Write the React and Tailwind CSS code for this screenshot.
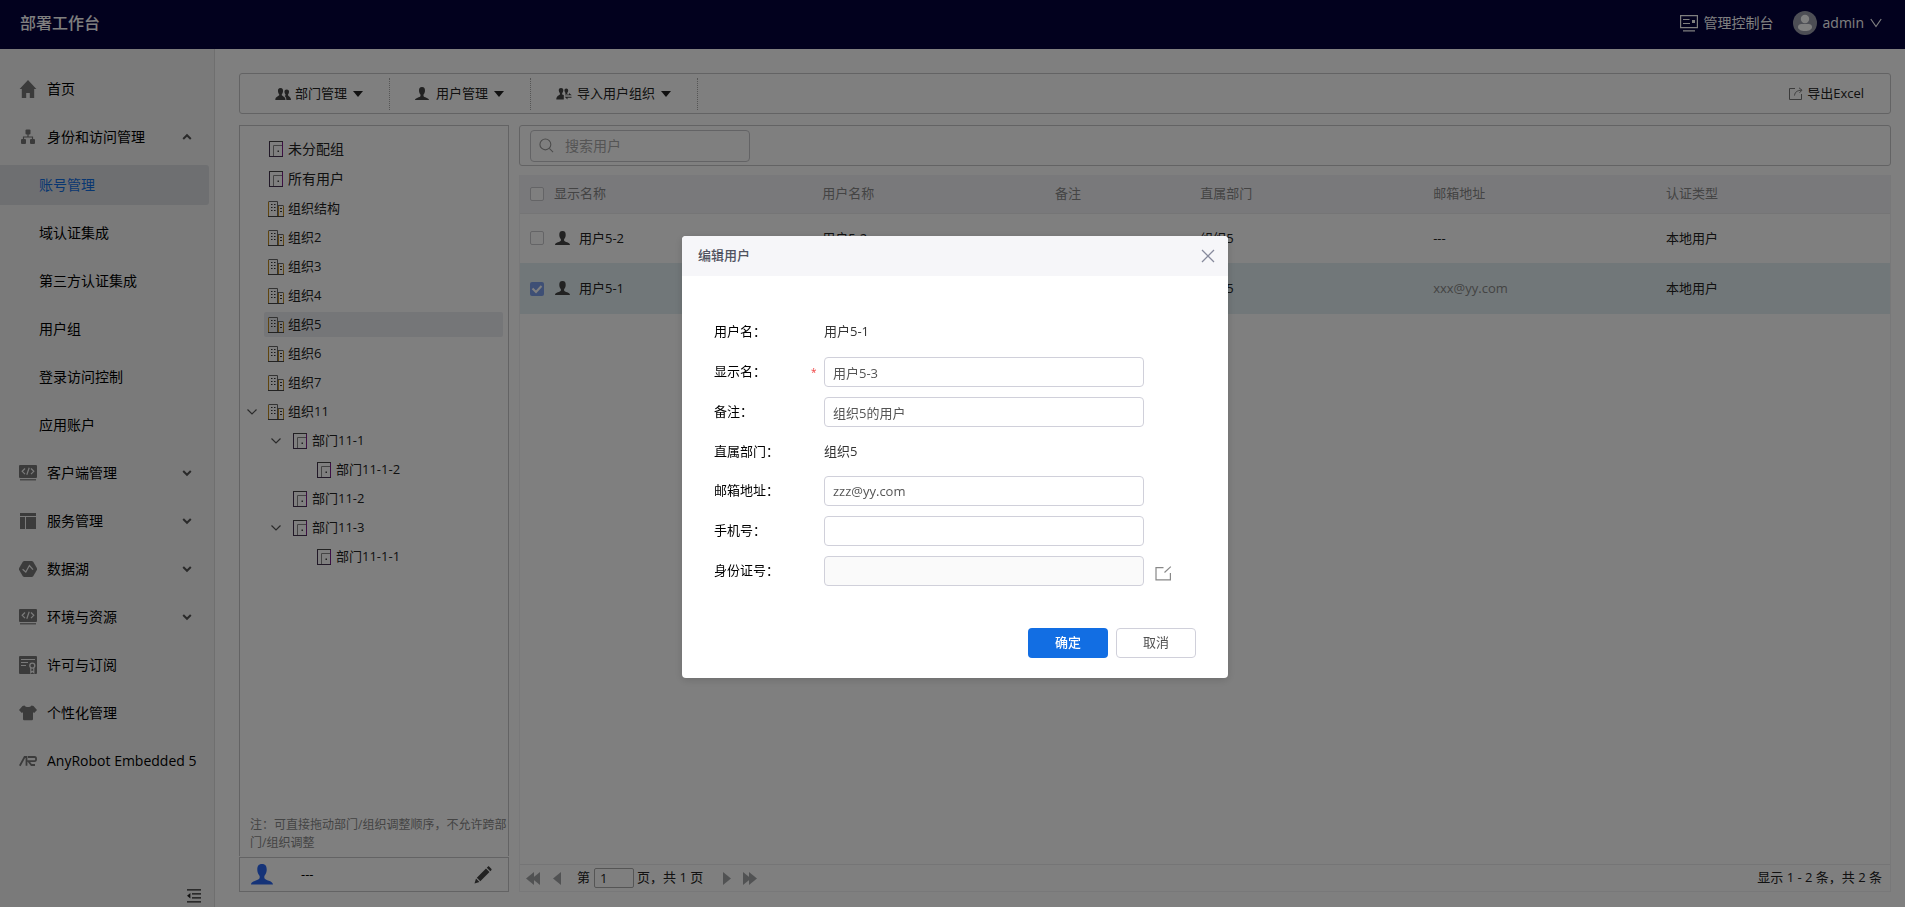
import { useState } from "react";

// ---------------------------
// ICONS
// ---------------------------
const HomeIcon = () => (
  <svg width="18" height="18" viewBox="0 0 18 18" fill="currentColor">
    <path d="M9 0 0.6 9h2.2v9h4.4v-5h3.6v5h4.4V9h2.2z" />
  </svg>
);

const OrgIcon = () => (
  <svg width="18" height="18" viewBox="0 0 18 18" fill="currentColor">
    <rect x="6.5" y="1.5" width="5" height="5" rx="1" />
    <rect x="2" y="11" width="5" height="5" rx="1" />
    <rect x="11" y="11" width="5" height="5" rx="1" />
    <path d="M8.4 6v2.4H3.9V12h1.2V9.6h7.8V12h1.2V8.4H9.6V6z" />
  </svg>
);

const CodeIcon = () => (
  <svg width="18" height="18" viewBox="0 0 18 18">
    <rect x="0" y="1" width="18" height="13" rx="1" fill="currentColor" />
    <rect x="1" y="15.2" width="16" height="1.2" fill="currentColor" />
    <path d="M6 4.5 3.2 7.3 6 10.1M12 4.5l2.8 2.8L12 10.1M10.2 3.8 7.8 10.8" fill="none" stroke="#f5f5f5" strokeWidth="1.2" />
  </svg>
);

const LayoutIcon = () => (
  <svg width="18" height="18" viewBox="0 0 18 18" fill="currentColor">
    <rect x="1" y="1" width="16" height="3" />
    <rect x="1" y="5" width="5" height="12" />
    <rect x="7" y="5" width="10" height="12" />
  </svg>
);

const LakeIcon = () => (
  <svg width="18" height="18" viewBox="0 0 18 18">
    <path d="M5 1h8l1.2.7L18 8.3v1.4l-3.8 6.6-1.2.7H5l-1.2-.7L0 9.7V8.3l3.8-6.6z" fill="currentColor" />
    <path d="M3.6 9.3 6.8 12 10.4 5.5 14 9.6" fill="none" stroke="#f5f5f5" strokeWidth="1.2" />
  </svg>
);

const LicenseIcon = () => (
  <svg width="18" height="18" viewBox="0 0 18 18">
    <rect width="18" height="18" rx="1" fill="currentColor" />
    <path d="M2 3.5h14M2 6.5h7M2 9.5h5" stroke="#f5f5f5" strokeWidth="1.1" />
    <circle cx="13.3" cy="9.6" r="2.5" fill="none" stroke="#f5f5f5" strokeWidth="1.3" />
    <path d="M11.8 12v4.6l1.5-1.3 1.5 1.3V12" fill="none" stroke="#f5f5f5" strokeWidth="1.2" />
  </svg>
);

const ShirtIcon = () => (
  <svg width="18" height="18" viewBox="0 0 18 18" fill="currentColor">
    <path d="M5.5 1.5C7 3.6 11 3.6 12.5 1.5L14.500 2 18 6l-2.800 3-1.200-.8V15.500l-.8.8H4.800l-.8-.8V8.200L2.800 9 0 6l3.500-4z" />
  </svg>
);

const RobotIcon = () => (
  <svg width="18" height="18" viewBox="0 0 18 18" fill="none" stroke="currentColor" strokeWidth="1.8">
    <path d="M0.8 13.800 5.600 5h1.900v8.800M9 5h6.600c2 0 2 4.200 0 4.200H9.400l3 3.800H16" />
  </svg>
);

const Arrow = ({ up }) => (
  <svg width="10" height="8" viewBox="0 0 10 8" fill="none" stroke="#555" strokeWidth="2">
    <path d={up ? "M1.200 6 5 2.200 8.800 6" : "M1.200 2 5 5.800 8.800 2"} />
  </svg>
);

const ThinArrow = ({ className }) => (
  <svg className={className} width="12" height="10" viewBox="0 0 12 10" fill="none" stroke="currentColor" strokeWidth="1.200">
    <path d="M1.500 2.500 6 7 10.500 2.500" />
  </svg>
);

const Caret = () => (
  <svg width="10" height="6" viewBox="0 0 10 6" fill="#222">
    <path d="M0 0h10L5 6z" />
  </svg>
);

const UserIcon = ({ size = 15, className = "text-[#444]" }) => (
  <svg className={className} width={size} height={size} viewBox="0 0 15 15" fill="currentColor">
    <path d="M7.500 0C5 0 4.200 1.600 4.300 4.200c.1 1.700.8 3 1.600 3.900v1.500C5.600 11.400 0 11.300 0 14h15c0-2.700-5.600-2.600-5.900-4.400V8.100c.8-.9 1.500-2.200 1.600-3.900C10.800 1.600 10 0 7.500 0z" />
  </svg>
);

const UsersIcon = () => (
  <svg width="16" height="14" viewBox="0 0 16 14" fill="#444">
    <path d="M5.500 1C3.400 1 2.800 2.500 3 4.400c.1 1.200.6 2.200 1.200 2.900v1C3.800 9.200.3 9.500.3 13h10.200c0-3.500-3.300-3.800-3.700-4.700v-1c.6-.7 1.100-1.700 1.200-2.900C8.200 2.500 7.600 1 5.500 1z" />
    <path d="M11.700 2.500c-1.800 0-2.400 1.200-2.200 2.700.1 1 .5 1.800 1 2.300v.8l-.8.6c1 .8 1.600 2 1.700 4.100H16c0-3-2.700-3.700-3-4.700v-.8c.5-.5.9-1.300 1-2.300.2-1.500-.5-2.700-2.300-2.700z" />
  </svg>
);

const ImportIcon = () => (
  <svg width="16" height="14" viewBox="0 0 16 14" fill="#444">
    <path d="M5 1C3.200 1 2.600 2.200 2.800 3.800c.1 1 .5 1.800 1.100 2.400v1.200C3.500 8.200.3 8.500.3 12.500h7.500V7.900L6.200 7.400V6.200c.5-.6 1-1.400 1.100-2.400C7.500 2.200 6.800 1 5 1z" />
    <path d="M10.300 1.500c-1.500 0-2 1-1.800 2.300.1.900.4 1.500.9 2v1.300h1.900V5.800c.4-.5.800-1.100.9-2 .1-1.300-.4-2.300-1.900-2.300z" />
    <path d="M9 7.500h4V6l2.800 2.200H9zM15.500 10.800h-4V12.500L8.700 9.800h6.800z" />
  </svg>
);

const DoorIcon = () => (
  <svg width="16" height="16" viewBox="0 0 16 16" fill="none">
    <path d="M1.500.5v15M1 15.500h14" stroke="#43304f" />
    <path d="M1 .5h14" stroke="#444" />
    <path d="M14.500 1v14" stroke="#7d1f8a" />
    <path d="M5.500 15V4.500H14" stroke="#888" />
    <rect x="9.500" y="9.500" width="1.500" height="1.500" fill="#444" />
  </svg>
);

const BuildingIcon = () => (
  <svg width="16" height="16" viewBox="0 0 16 16" fill="none">
    <path d="M0 15.500h16" stroke="#444" />
    <path d="M.500.500h9V15M10 4.500h5.500" stroke="#666" />
    <path d="M.500 15V1M15.500 15V5M10.500 5v10" stroke="#c08a1c" />
    <path d="M3 3.500h1.500M6 3.500h1.500M3 6.500h1.500M6 6.500h1.500M3 9.500h1.500M6 9.500h1.500M12 7.500h2M12 10.500h2" stroke="#333" />
  </svg>
);

const SearchIcon = () => (
  <svg width="15" height="15" viewBox="0 0 16 16" fill="none" stroke="#999" strokeWidth="1.200">
    <circle cx="6.800" cy="6.800" r="5.800" />
    <path d="m11 11 4 4" />
  </svg>
);

const ExportIcon = () => (
  <svg width="14" height="14" viewBox="0 0 14 14" fill="none" stroke="#777">
    <path d="M6 1.500H.5v11h12V7" />
    <path d="M5.500 8.500C6 5 8 3.500 12.500 3.200M10 .8l3 2.400-2.500 2.600" />
  </svg>
);

const EditIcon = () => (
  <svg width="17" height="15" viewBox="0 0 17 15" fill="none" stroke="#888" strokeWidth="1.200">
    <path d="M8.500 1.600H1v12.200h14.400V7M9.500 6.500 15.800.6" />
  </svg>
);

const PencilIcon = () => (
  <svg width="18" height="18" viewBox="0 0 18 18" fill="#444">
    <path d="M.5 17.500 2 12.500 5.500 16zM2.800 11.700 12 2.500 15.500 6 6.300 15.200zM12.800 1.700l1-1c.5-.5 1-.5 1.500 0l2 2c.5.5.5 1 0 1.500l-1 1z" />
  </svg>
);

const CollapseIcon = () => (
  <svg width="14" height="14" viewBox="0 0 14 14">
    <path d="M0 .8h14M5 4.800h9M5 8.800h9M0 12.800h14" stroke="#222" strokeWidth="1.200" />
    <path d="M3.400 4v5.400L0 6.700z" fill="#222" />
  </svg>
);

const ConsoleIcon = () => (
  <svg width="18" height="17" viewBox="0 0 18 17" fill="none" stroke="#fff" strokeWidth="1.200">
    <path d="M.6.6h16.800v12H.6zM3 15.800h12M3 4.500h6.500M3 8.500h7" />
    <rect x="12" y="5" width="3" height="3" fill="#fff" stroke="none" />
  </svg>
);

const PageArrow = ({ double, next }) => (
  <svg
    className={next ? "rotate-180" : ""}
    width={double ? 14 : 8}
    height="13"
    viewBox={double ? "0 0 14 13" : "0 0 8 13"}
    fill="#a3a5a7"
  >
    <path d="M8 0v13L0 6.500z" />
    {double && <path d="M14 0v13L6 6.500z" />}
  </svg>
);

// ---------------------------
// DATA
// ---------------------------
const menu = [
  { label: "首页", icon: HomeIcon },
  {
    label: "身份和访问管理",
    icon: OrgIcon,
    open: true,
    children: ["账号管理", "域认证集成", "第三方认证集成", "用户组", "登录访问控制", "应用账户"],
  },
  { label: "客户端管理", icon: CodeIcon, arrow: true },
  { label: "服务管理", icon: LayoutIcon, arrow: true },
  { label: "数据湖", icon: LakeIcon, arrow: true },
  { label: "环境与资源", icon: CodeIcon, arrow: true },
  { label: "许可与订阅", icon: LicenseIcon },
  { label: "个性化管理", icon: ShirtIcon },
  { label: "AnyRobot Embedded 5", icon: RobotIcon },
];

const toolbar = [
  { label: "部门管理", icon: <UsersIcon />, gap: "gap-1" },
  { label: "用户管理", icon: <UserIcon size={14} />, gap: "gap-[7px]" },
  { label: "导入用户组织", icon: <ImportIcon />, gap: "gap-[5px]" },
];

const tree = [
  { label: "组织结构", pad: "pl-1" },
  { label: "组织2", pad: "pl-1" },
  { label: "组织3", pad: "pl-1" },
  { label: "组织4", pad: "pl-1" },
  { label: "组织5", pad: "pl-1", active: true },
  { label: "组织6", pad: "pl-1" },
  { label: "组织7", pad: "pl-1" },
  { label: "组织11", pad: "pl-1", open: true },
  { label: "部门11-1", pad: "pl-7", dept: true, open: true },
  { label: "部门11-1-2", pad: "pl-[52px]", dept: true },
  { label: "部门11-2", pad: "pl-7", dept: true },
  { label: "部门11-3", pad: "pl-7", dept: true, open: true },
  { label: "部门11-1-1", pad: "pl-[52px]", dept: true },
];

const users = [
  { name: "用户5-2", account: "用户5-2", dept: "组织5", email: "---", type: "本地用户" },
  { name: "用户5-1", account: "用户5-1", dept: "组织5", email: "xxx@yy.com", type: "本地用户", checked: true },
];

const boxClass =
  "appearance-none size-[14px] border border-[#c8c8cc] rounded-[2px] bg-white block";

// ---------------------------
// HEADER
// ---------------------------
function Header() {
  return (
    <header className="h-[49px] shrink-0 bg-[#04023c] text-white flex items-center justify-between pl-5 pr-[23px] pb-[3px]">
      <h1 className="text-base font-medium">部署工作台</h1>
      <div className="flex items-center text-sm">
        <a href="#console" className="flex items-center gap-[6px]">
          <ConsoleIcon />
          管理控制台
        </a>
        <button type="button" className="flex items-center ml-[19px] gap-[6px]">
          <svg width="24" height="24" viewBox="0 0 24 24">
            <circle cx="12" cy="12" r="12" fill="#9b9dab" />
            <circle cx="12" cy="8" r="4.200" fill="#fff" />
            <path d="M5 16c0-2 1.500-3 3.500-3h7c2 0 3.500 1 3.500 3 0 2.500-3 4-7 4s-7-1.500-7-4z" fill="#fff" />
          </svg>
          admin
          <svg width="12" height="10" viewBox="0 0 12 10" fill="none" stroke="#fff" strokeWidth="1.200">
            <path d="M.8 1 6 8.500 11.200 1" />
          </svg>
        </button>
      </div>
    </header>
  );
}

// ---------------------------
// SIDEBAR
// ---------------------------
function Sidebar() {
  return (
    <aside className="w-[215px] shrink-0 bg-[#f5f5f5] border-r border-[#dedede] flex flex-col justify-between pt-5 pb-1 text-sm text-black">
      <nav className="flex flex-col gap-2 pr-[5px]">
        {menu.map((item) => {
          const Icon = item.icon;
          return (
            <div key={item.label} className="flex flex-col gap-2">
              <a href="#menu" className="h-10 flex items-center pl-[19px] pr-[17px]">
                <span className="text-[#777] mr-[10px]">
                  <Icon />
                </span>
                <span className="flex-1 whitespace-nowrap">{item.label}</span>
                {item.open && <Arrow up />}
                {item.arrow && <Arrow />}
              </a>
              {item.children?.map((child, i) => (
                <a
                  key={child}
                  href="#menu"
                  className={`h-10 flex items-center pl-[39px] rounded-r-[3px] ${
                    i === 0 ? "bg-[#dcdfe2] text-[#126ee3]" : ""
                  }`}
                >
                  {child}
                </a>
              ))}
            </div>
          );
        })}
      </nav>
      <button type="button" aria-label="收起" className="self-end mr-[13px]">
        <CollapseIcon />
      </button>
    </aside>
  );
}

// ---------------------------
// TREE
// ---------------------------
function TreePanel() {
  return (
    <section className="w-[270px] shrink-0 flex flex-col">
      <div className="flex-1 border border-b-0 border-[#c6c6c8] pt-2 pb-1 flex flex-col text-[#222]">
        <ul className="text-sm">
          {["未分配组", "所有用户"].map((label) => (
            <li key={label} className="h-[30px] pl-7 flex items-center gap-1">
              <DoorIcon />
              {label}
            </li>
          ))}
        </ul>
        <ul className="text-[13px] pl-6 pr-[5px]">
          {tree.map((node) => (
            <li key={node.label} className="py-[2px]">
              <div
                className={`h-[25px] flex items-center gap-1 rounded-[2px] ${node.pad} ${
                  node.active ? "bg-[#ebedf0]" : ""
                }`}
              >
                {node.open && (
                  <span className="-ml-[22px] mr-[6px]">
                    <ThinArrow className="text-[#555]" />
                  </span>
                )}
                {node.dept ? <DoorIcon /> : <BuildingIcon />}
                {node.label}
              </div>
            </li>
          ))}
        </ul>
        <p className="mt-auto pl-[10px] text-xs leading-[18px] text-[#888]">
          注：可直接拖动部门/组织调整顺序，不允许跨部门/组织调整
        </p>
      </div>
      <div className="h-[35px] mt-px border border-[#c6c6c8] flex items-center pl-[11px] pr-4 text-[13px]">
        <UserIcon size={22} className="text-[#2a66f0]" />
        <span className="flex-1 pl-7">---</span>
        <button type="button" aria-label="编辑">
          <PencilIcon />
        </button>
      </div>
    </section>
  );
}

// ---------------------------
// USER TABLE
// ---------------------------
function UserPanel() {
  return (
    <section className="flex-1 min-w-0 flex flex-col text-[13px]">
      <div className="h-[41px] border border-[#c6c6c8] rounded-[3px] pl-[10px] flex items-center">
        <label className="w-[220px] h-8 border border-[#c6c6ca] rounded flex items-center pl-2 gap-[11px]">
          <SearchIcon />
          <input
            type="text"
            aria-label="搜索用户"
            placeholder="搜索用户"
            className="w-[170px] text-sm outline-none placeholder:text-[#aaa]"
          />
        </label>
      </div>

      <div className="mt-[9px] flex-1 flex flex-col border border-t-0 border-[#f0f0f2]">
        <table className="w-full table-fixed text-left">
          <colgroup>
            <col className="w-[27px]" />
            <col className="w-[19.5%]" />
            <col className="w-[17%]" />
            <col className="w-[10.6%]" />
            <col className="w-[17%]" />
            <col className="w-[17%]" />
            <col />
          </colgroup>
          <thead>
            <tr className="h-[38px] bg-[#f3f3f7] text-[#888] border-b border-[#eaeaec]">
              <th className="pl-[10px]">
                <input type="checkbox" aria-label="全选" className={boxClass} />
              </th>
              <th className="px-[7px] font-normal">显示名称</th>
              <th className="px-2 font-normal">用户名称</th>
              <th className="px-2 font-normal">备注</th>
              <th className="px-2 font-normal">直属部门</th>
              <th className="px-2 font-normal">邮箱地址</th>
              <th className="px-2 font-normal">认证类型</th>
            </tr>
          </thead>
          <tbody>
            {users.map((u) => (
              <tr
                key={u.name}
                className={`text-[#222] ${u.checked ? "h-[51px] bg-[#e3eff2]" : "h-[50px]"}`}
              >
                <td className="pl-[10px]">
                  {u.checked ? (
                    <span className="relative block size-[14px]">
                      <input
                        type="checkbox"
                        aria-label={u.name}
                        defaultChecked
                        className="appearance-none block size-[14px] rounded-[2px] bg-[#7d9fea]"
                      />
                      <svg className="absolute inset-0 pointer-events-none" width="14" height="14" viewBox="0 0 14 14" fill="none" stroke="#fff" strokeWidth="2">
                        <path d="m2.500 6.500 3.500 3.500 5.500-6" />
                      </svg>
                    </span>
                  ) : (
                    <input type="checkbox" aria-label={u.name} className={boxClass} />
                  )}
                </td>
                <td className="px-2">
                  <span className="flex items-center gap-[9px]">
                    <UserIcon />
                    {u.name}
                  </span>
                </td>
                <td className="px-2">{u.account}</td>
                <td></td>
                <td className="px-2">{u.dept}</td>
                <td className={`px-2 ${u.checked ? "text-[#888]" : ""}`}>{u.email}</td>
                <td className="px-2">{u.type}</td>
              </tr>
            ))}
          </tbody>
        </table>

        {/* Pagination */}
        <div className="mt-auto h-[27px] border-t border-[#eaeaec] flex items-center justify-between pl-[6px] pr-2 text-[#222]">
          <div className="flex items-center">
            <button type="button" aria-label="首页"><PageArrow double /></button>
            <button type="button" aria-label="上一页" className="ml-[13px] mr-4"><PageArrow /></button>
            <label className="flex items-center gap-1">
              第
              <input
                type="text"
                defaultValue="1"
                className="w-10 h-5 border border-[#aaa] rounded-[2px] pl-[5px]"
              />
            </label>
            <span className="ml-[3px]">页，共 1 页</span>
            <button type="button" aria-label="下一页" className="ml-5 mr-3"><PageArrow next /></button>
            <button type="button" aria-label="末页"><PageArrow double next /></button>
          </div>
          <span>显示 1 - 2 条，共 2 条</span>
        </div>
      </div>
    </section>
  );
}

// ---------------------------
// EDIT DIALOG
// ---------------------------
const inputClass =
  "w-80 h-[30px] border border-[#d0d0da] rounded px-2 text-[#555] bg-white disabled:bg-[#fafafa]";

function EditDialog() {
  const [form, setForm] = useState({
    name: "用户5-3",
    remark: "组织5的用户",
    email: "zzz@yy.com",
    phone: "",
    idCard: "",
  });

  const fields = [
    { label: "用户名：", text: "用户5-1" },
    { label: "显示名：", key: "name", required: true },
    { label: "备注：", key: "remark" },
    { label: "直属部门：", text: "组织5" },
    { label: "邮箱地址：", key: "email" },
    { label: "手机号：", key: "phone" },
    { label: "身份证号：", key: "idCard", disabled: true },
  ];

  return (
    <div className="fixed inset-0 bg-black/50 flex items-center justify-center pt-[7px] pl-[5px]">
      <div
        role="dialog"
        aria-label="编辑用户"
        className="w-[546px] bg-white rounded shadow-[0_2px_8px_rgba(0,0,0,0.15)] text-[13px]"
      >
        <div className="h-10 bg-[#f6f6f9] rounded-t flex items-center justify-between pl-4 pr-[13px]">
          <h2 className="font-medium text-[#505260]">编辑用户</h2>
          <button type="button" aria-label="关闭">
            <svg width="14" height="14" viewBox="0 0 14 14" stroke="#868a9c" strokeWidth="1.300">
              <path d="m1 1 12 12M13 1 1 13" />
            </svg>
          </button>
        </div>

        <form className="px-8 pt-9 pb-5" onSubmit={(e) => e.preventDefault()}>
          {fields.map((f) => (
            <div key={f.label} className={`flex items-center ${f.text === "组织5" ? "h-[39px]" : "h-10"}`}>
              <label htmlFor={f.key} className="w-[97px] text-black">
                {f.label}
              </label>
              <span className="w-[13px] text-[10px] text-[#f04040]">{f.required ? "*" : ""}</span>
              {f.text ? (
                <span className="text-[#333]">{f.text}</span>
              ) : (
                <input
                  id={f.key}
                  type="text"
                  value={form[f.key]}
                  disabled={f.disabled}
                  onChange={(e) => setForm({ ...form, [f.key]: e.target.value })}
                  className={inputClass}
                />
              )}
              {f.disabled && (
                <button type="button" aria-label="编辑身份证号" className="ml-[11px] pt-1">
                  <EditIcon />
                </button>
              )}
            </div>
          ))}

          <div className="mt-[37px] flex justify-end gap-2">
            <button type="submit" className="w-20 h-[30px] rounded bg-[#126ee3] text-white font-medium">
              确定
            </button>
            <button type="button" className="w-20 h-[30px] rounded border border-[#d0d0da] text-[#505050]">
              取消
            </button>
          </div>
        </form>
      </div>
    </div>
  );
}

export default function App() {
  return (
    <div className="min-h-screen flex flex-col bg-white font-['Open_Sans','Noto_Sans_CJK_SC',sans-serif]">
      <Header />
      <div className="flex-1 flex">
        <Sidebar />
        <main className="flex-1 min-w-0 flex flex-col pl-6 pr-[14px] pt-6 pb-[15px]">
          <div className="h-[41px] border border-[#c6c6c8] rounded-[3px] flex items-center justify-between pl-[10px] pr-[26px] text-[13px] text-[#222]">
            <div className="flex">
              {toolbar.map((t) => (
                <button
                  key={t.label}
                  type="button"
                  className="h-8 pl-[25px] pr-[26px] flex items-center gap-[6px] border-r border-dotted border-[#aaa]"
                >
                  <span className={`flex items-center ${t.gap}`}>
                    {t.icon}
                    {t.label}
                  </span>
                  <Caret />
                </button>
              ))}
            </div>
            <button type="button" className="flex items-center gap-1">
              <ExportIcon />
              导出Excel
            </button>
          </div>
          <div className="mt-[11px] flex-1 flex gap-[10px]">
            <TreePanel />
            <UserPanel />
          </div>
        </main>
      </div>
      <EditDialog />
    </div>
  );
}
